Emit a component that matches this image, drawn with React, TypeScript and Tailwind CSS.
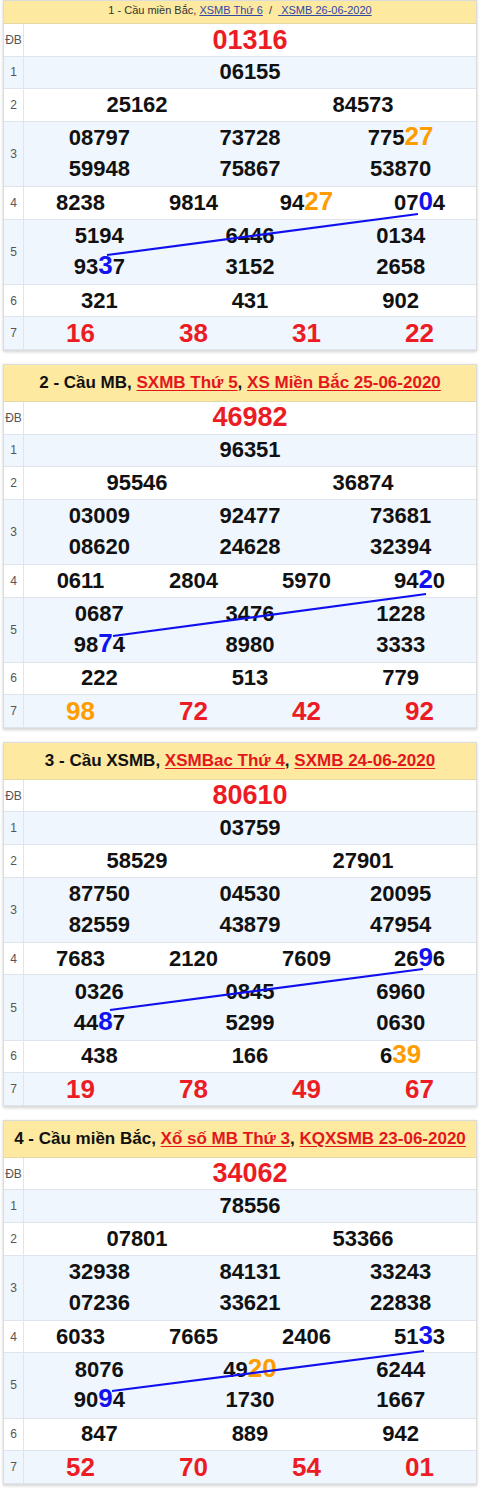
import React from 'react';

type Seg = string | [keyof typeof hlColor, string];
type Num = string | Seg[];

const hlColor = {
  o: 'text-[#ff9d00]',
  b: 'text-[#1212f0]',
};

type Card = {
  title: React.ReactNode;
  small?: boolean;
  db: string;
  g1: string;
  g2: Num[];
  g3: Num[];
  g4: Num[];
  g5: Num[];
  g6: Num[];
  g7: Num[];
  line: [number, number, number, number];
};

const redLink = 'text-[#e3161e] underline underline-offset-2';

const cards: Card[] = [
  {
    small: true,
    title: (
      <>
        1 - Cầu miền Bắc, <span className="text-[#3245a8] underline">XSMB Thứ 6</span>
        {'\u00a0 /\u00a0 '}
        <span className="text-[#3245a8] underline">{'\u00a0XSMB 26-06-2020'}</span>
      </>
    ),
    db: '01316',
    g1: '06155',
    g2: ['25162', '84573'],
    g3: ['08797', '73728', ['775', ['o', '27']], '59948', '75867', '53870'],
    g4: ['8238', '9814', ['94', ['o', '27']], ['07', ['b', '0'], '4']],
    g5: ['5194', '6446', '0134', ['93', ['b', '3'], '7'], '3152', '2658'],
    g6: ['321', '431', '902'],
    g7: ['16', '38', '31', '22'],
    line: [103, 231, 414, 190],
  },
  {
    title: (
      <>
        2 - Cầu MB, <span className={redLink}>SXMB Thứ 5</span>,{' '}
        <span className={redLink}>XS Miền Bắc 25-06-2020</span>
      </>
    ),
    db: '46982',
    g1: '96351',
    g2: ['95546', '36874'],
    g3: ['03009', '92477', '73681', '08620', '24628', '32394'],
    g4: ['0611', '2804', '5970', ['94', ['b', '2'], '0']],
    g5: ['0687', '3476', '1228', ['98', ['b', '7'], '4'], '8980', '3333'],
    g6: ['222', '513', '779'],
    g7: [[['o', '98']], '72', '42', '92'],
    line: [109, 234, 422, 192],
  },
  {
    title: (
      <>
        3 - Cầu XSMB, <span className={redLink}>XSMBac Thứ 4</span>,{' '}
        <span className={redLink}>SXMB 24-06-2020</span>
      </>
    ),
    db: '80610',
    g1: '03759',
    g2: ['58529', '27901'],
    g3: ['87750', '04530', '20095', '82559', '43879', '47954'],
    g4: ['7683', '2120', '7609', ['26', ['b', '9'], '6']],
    g5: ['0326', '0845', '6960', ['44', ['b', '8'], '7'], '5299', '0630'],
    g6: ['438', '166', ['6', ['o', '39']]],
    g7: ['19', '78', '49', '67'],
    line: [106, 230, 419, 189],
  },
  {
    title: (
      <>
        4 - Cầu miền Bắc, <span className={redLink}>Xổ số MB Thứ 3</span>,{' '}
        <span className={redLink}>KQXSMB 23-06-2020</span>
      </>
    ),
    db: '34062',
    g1: '78556',
    g2: ['07801', '53366'],
    g3: ['32938', '84131', '33243', '07236', '33621', '22838'],
    g4: ['6033', '7665', '2406', ['51', ['b', '3'], '3']],
    g5: ['8076', ['49', ['o', '20']], '6244', ['90', ['b', '9'], '4'], '1730', '1667'],
    g6: ['847', '889', '942'],
    g7: ['52', '70', '54', '01'],
    line: [108, 233, 420, 193],
  },
];

function Value({ v }: { v: Num }) {
  if (typeof v === 'string') return <>{v}</>;
  return (
    <>
      {v.map((s, i) =>
        typeof s === 'string' ? (
          <span key={i}>{s}</span>
        ) : (
          <span key={i} className={`${hlColor[s[0]]} text-[26px] leading-none`}>
            {s[1]}
          </span>
        )
      )}
    </>
  );
}

function Row({
  label,
  alt,
  double,
  children,
}: {
  label: string;
  alt?: boolean;
  double?: boolean;
  children: React.ReactNode;
}) {
  return (
    <div
      className={`flex border-b border-[#dfe5ec] last:border-b-0 ${alt ? 'bg-[#eff6fd]' : 'bg-white'} ${
        double ? 'h-[65.2px]' : 'h-[32.6px]'
      }`}
    >
      <div className="w-[20px] shrink-0 border-r border-[#dfe5ec] flex items-center justify-center text-[12px] text-[#555]">
        {label}
      </div>
      <div className="flex-1 min-w-0">{children}</div>
    </div>
  );
}

function Grid({ nums, cols, double }: { nums: Num[]; cols: 1 | 2 | 3 | 4; double?: boolean }) {
  const colClass =
    cols === 1 ? 'grid-cols-1' : cols === 2 ? 'grid-cols-2' : cols === 3 ? 'grid-cols-3' : 'grid-cols-4';
  return (
    <div
      className={`grid ${colClass} h-full content-center text-[22px] font-bold text-[#111] ${
        double ? 'leading-[30.5px]' : 'leading-[30px]'
      }`}
    >
      {nums.map((n, i) => (
        <div key={i} className="text-center whitespace-nowrap">
          <Value v={n} />
        </div>
      ))}
    </div>
  );
}

function ResultCard({ c }: { c: Card }) {
  const [x1, y1, x2, y2] = c.line;
  return (
    <div className="mx-[3px] border border-[#dcdcdc] shadow-[0_1px_3px_rgba(0,0,0,0.18)] bg-white">
      <div
        className={`bg-[#fde99f] border-b border-[#e6d9a8] flex justify-center ${
          c.small
            ? 'h-[23px] items-start pt-[1px] text-[11px] text-[#333]'
            : 'h-[37px] items-center text-[17px] font-bold text-[#111]'
        }`}
      >
        <div>{c.title}</div>
      </div>
      <div className="relative">
        <Row label="ĐB">
          <div className="h-full flex items-center justify-center text-[27px] font-bold text-[#ec1c24]">
            {c.db}
          </div>
        </Row>
        <Row label="1" alt>
          <Grid nums={[c.g1]} cols={1} />
        </Row>
        <Row label="2">
          <Grid nums={c.g2} cols={2} />
        </Row>
        <Row label="3" alt double>
          <Grid nums={c.g3} cols={3} double />
        </Row>
        <Row label="4">
          <Grid nums={c.g4} cols={4} />
        </Row>
        <Row label="5" alt double>
          <Grid nums={c.g5} cols={3} double />
        </Row>
        <Row label="6">
          <Grid nums={c.g6} cols={3} />
        </Row>
        <Row label="7" alt>
          <div className="grid grid-cols-4 h-full content-center text-[26px] font-bold text-[#ec1c24] leading-[30px]">
            {c.g7.map((n, i) => (
              <div key={i} className="text-center">
                <Value v={n} />
              </div>
            ))}
          </div>
        </Row>
        <svg className="absolute inset-0 w-full h-full pointer-events-none" fill="none">
          <line x1={x1} y1={y1} x2={x2} y2={y2} stroke="#1010ee" strokeWidth="2.2" />
        </svg>
      </div>
    </div>
  );
}

export default function App() {
  return (
    <div className="w-[480px] min-h-[1490px] bg-white font-['Liberation_Sans',Arial,sans-serif]">
      <div className="flex flex-col gap-[13px]">
        {cards.map((c, i) => (
          <ResultCard key={i} c={c} />
        ))}
      </div>
    </div>
  );
}
